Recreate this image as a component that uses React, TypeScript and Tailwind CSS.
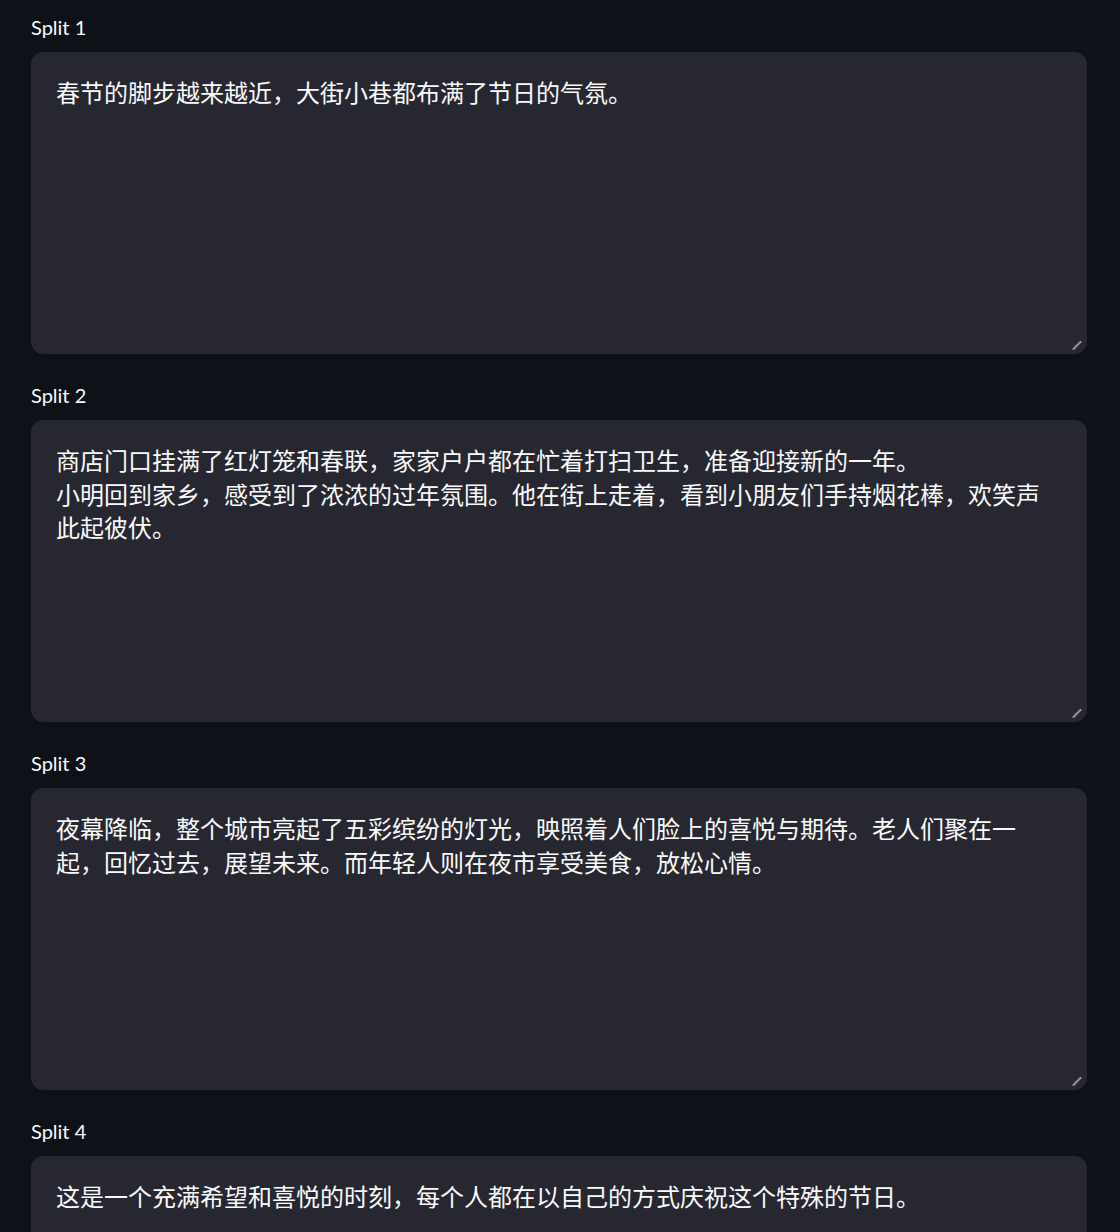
import React from 'react';

const splits = [
  '春节的脚步越来越近，大街小巷都布满了节日的气氛。',
  '商店门口挂满了红灯笼和春联，家家户户都在忙着打扫卫生，准备迎接新的一年。\n小明回到家乡，感受到了浓浓的过年氛围。他在街上走着，看到小朋友们手持烟花棒，欢笑声此起彼伏。',
  '夜幕降临，整个城市亮起了五彩缤纷的灯光，映照着人们脸上的喜悦与期待。老人们聚在一起，回忆过去，展望未来。而年轻人则在夜市享受美食，放松心情。',
  '这是一个充满希望和喜悦的时刻，每个人都在以自己的方式庆祝这个特殊的节日。',
];

// textarea resize grip in the bottom-right corner
function ResizeGrip() {
  return (
    <svg className="absolute right-[3px] bottom-[2px] w-[12px] h-[12px]" viewBox="0 0 12 12">
      <line x1="2.5" y1="10" x2="9.5" y2="3" stroke="#a3a3a8" strokeWidth="2" strokeLinecap="round" />
      <line x1="3" y1="10.5" x2="10" y2="3.5" stroke="#55565d" strokeWidth="0.8" />
    </svg>
  );
}

function SplitArea({ label, text }: { label: string; text: string }) {
  return (
    <div className="flex flex-col">
      <label className="h-[29px] leading-[29px] mb-[10px] text-[20px] text-[#fafafa] font-['Lato','Noto_Sans',sans-serif]">
        {label}
      </label>
      <div className="relative h-[302px] rounded-[12px] bg-[#262730] border border-[#262730] px-[24px] pt-[22px] pb-[24px] overflow-hidden">
        <div className="whitespace-pre-wrap break-all text-[24px] leading-[33.6px] text-[#fafafa] font-['Noto_Sans_CJK_SC','Noto_Sans',sans-serif]">
          {text}
        </div>
        <ResizeGrip />
      </div>
    </div>
  );
}

export default function App() {
  return (
    <div className="min-h-screen h-[1232px] overflow-hidden bg-[#0e1117] pl-[31px] pr-[33px] pt-[13px]">
      <div className="flex flex-col gap-[27px]">
        {splits.map((s, i) => (
          <SplitArea key={i} label={`Split ${i + 1}`} text={s} />
        ))}
      </div>
    </div>
  );
}
